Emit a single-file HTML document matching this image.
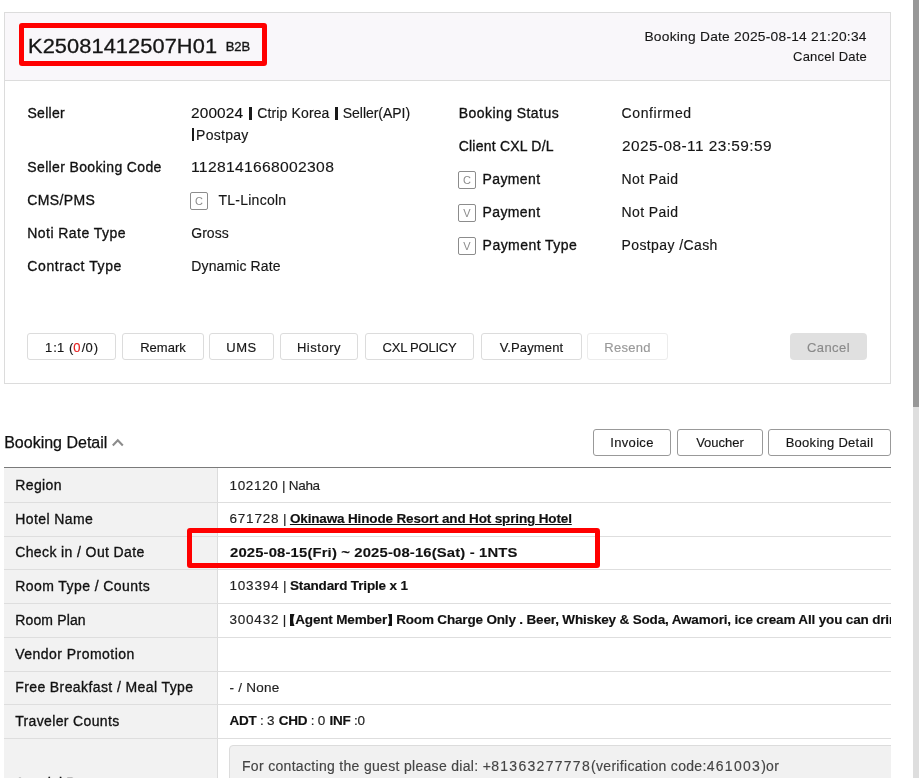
<!DOCTYPE html>
<html><head><meta charset="utf-8"><style>
html,body{margin:0;padding:0;width:919px;height:778px;overflow:hidden;background:#fff;}
body{position:relative;font-family:"Liberation Sans", sans-serif;will-change:transform;}
.t{position:absolute;white-space:nowrap;letter-spacing:var(--ls);}
.clip b{color:#111;}
.d{letter-spacing:calc(var(--ls) + 0.07em);}
b .d{letter-spacing:calc(var(--ls) + 0.1em);}
.nd .d{letter-spacing:var(--ls);}
.nd{-webkit-text-stroke:0.12px currentColor !important;}
.med{-webkit-text-stroke:0.32px currentColor;color:#111 !important;}
.reg{-webkit-text-stroke:0.15px currentColor;}
#bd_title{-webkit-text-stroke:0.25px currentColor;}
#b2b{-webkit-text-stroke:0.35px currentColor !important;}
#bkno{-webkit-text-stroke:0.3px currentColor !important;}
.bar{display:inline-block;width:3px;height:13px;background:#111;vertical-align:-2px;}
.cb{position:absolute;width:18px;height:18px;box-sizing:border-box;border:1px solid #8c8c8c;border-radius:2px;font-size:11px;line-height:16px;text-align:center;color:#8c8c8c;font-family:"Liberation Sans", sans-serif;}
.clip{position:absolute;left:0;top:0;width:891px;height:778px;overflow:hidden;}
.br{display:inline-block;vertical-align:-2px;margin:0 0.5px;}
.lbr{border-left:3px solid #111;border-top:1px solid #111;border-bottom:1px solid #111;width:2px;box-sizing:content-box;height:10px}
.rbr{border-right:3px solid #111;border-top:1px solid #111;border-bottom:1px solid #111;width:2px;box-sizing:content-box;height:10px}
</style></head><body>
<div style="position:absolute;left:913px;top:0px;width:6px;height:778px;box-sizing:border-box;background:#dedede"></div>
<div style="position:absolute;left:913px;top:0px;width:6px;height:407px;box-sizing:border-box;background:#989898"></div>
<div style="position:absolute;left:4px;top:12px;width:887px;height:372px;box-sizing:border-box;border:1px solid #dcdcdc;background:#fff"></div>
<div style="position:absolute;left:5px;top:13px;width:885px;height:68px;box-sizing:border-box;background:#f9f7fa;border-bottom:1px solid #dcdcdc"></div>
<div style="position:absolute;left:19px;top:23px;width:248px;height:43px;box-sizing:border-box;border:5px solid #ff0000;border-radius:3px"></div>
<div style="position:absolute;left:249.4px;top:107.4px;width:2.6px;height:12.4px;background:#1a1a1a"></div>
<div style="position:absolute;left:335px;top:107.4px;width:2.6px;height:12.4px;background:#1a1a1a"></div>
<div style="position:absolute;left:191.8px;top:128.4px;width:2.6px;height:12.4px;background:#1a1a1a"></div>
<div class="cb" style="left:190px;top:192px">C</div>
<div class="cb" style="left:458px;top:171px">C</div>
<div class="cb" style="left:458px;top:204px">V</div>
<div class="cb" style="left:458px;top:237px">V</div>
<div style="position:absolute;left:27px;top:333px;width:89px;height:27px;box-sizing:border-box;border:1px solid #dcdcdc;border-radius:3px;background:#fff"></div>
<div style="position:absolute;left:122px;top:333px;width:82px;height:27px;box-sizing:border-box;border:1px solid #dcdcdc;border-radius:3px;background:#fff"></div>
<div style="position:absolute;left:209px;top:333px;width:65px;height:27px;box-sizing:border-box;border:1px solid #dcdcdc;border-radius:3px;background:#fff"></div>
<div style="position:absolute;left:280px;top:333px;width:78px;height:27px;box-sizing:border-box;border:1px solid #dcdcdc;border-radius:3px;background:#fff"></div>
<div style="position:absolute;left:365px;top:333px;width:109px;height:27px;box-sizing:border-box;border:1px solid #dcdcdc;border-radius:3px;background:#fff"></div>
<div style="position:absolute;left:481px;top:333px;width:101px;height:27px;box-sizing:border-box;border:1px solid #dcdcdc;border-radius:3px;background:#fff"></div>
<div style="position:absolute;left:587px;top:333px;width:81px;height:27px;box-sizing:border-box;border:1px solid #ececec;border-radius:3px;background:#fff"></div>
<div style="position:absolute;left:790px;top:333px;width:77px;height:27px;box-sizing:border-box;background:#e0e0e0;border-radius:4px"></div>
<div style="position:absolute;left:593px;top:429px;width:78px;height:27px;box-sizing:border-box;border:1px solid #999;border-radius:3px;background:#fff"></div>
<div style="position:absolute;left:677px;top:429px;width:86px;height:27px;box-sizing:border-box;border:1px solid #999;border-radius:3px;background:#fff"></div>
<div style="position:absolute;left:768px;top:429px;width:123px;height:27px;box-sizing:border-box;border:1px solid #999;border-radius:3px;background:#fff"></div>
<svg style="position:absolute;left:111px;top:437px" width="14" height="11" viewBox="0 0 14 11"><path d="M1.8 8.4 L6.8 3.2 L11.8 8.4" fill="none" stroke="#8c8c8c" stroke-width="2.1"/></svg>
<div class="t reg nd" id="bkno" style="top:36.07px;font-size:20px;line-height:20px;color:#161616;--ls:0.071px;transform:scaleX(1.09);transform-origin:left;left:28.00px;">K<span class="d">25081412507</span>H<span class="d">01</span></div>
<div class="t reg nd" id="b2b" style="top:40.00px;font-size:13px;line-height:13px;color:#161616;--ls:0.000px;transform:scaleX(1.0);transform-origin:left;left:225.70px;">B<span class="d">2</span>B</div>
<div class="t reg nd" id="bdate" style="top:30.40px;font-size:13px;line-height:13px;color:#161616;--ls:0.226px;transform:scaleX(1.06);transform-origin:right;right:52.00px;text-align:right;">Booking Date <span class="d">2025</span>-<span class="d">08</span>-<span class="d">14</span> <span class="d">21</span>:<span class="d">20</span>:<span class="d">34</span></div>
<div class="t reg nd" id="cdate" style="top:50.00px;font-size:13px;line-height:13px;color:#161616;--ls:0.220px;transform:scaleX(1.0);transform-origin:right;right:52.00px;text-align:right;">Cancel Date</div>
<div class="t med" id="l_seller" style="top:106.15px;font-size:14px;line-height:14px;color:#222;--ls:0.320px;left:27.40px;">Seller</div>
<div class="t med" id="l_sbc" style="top:159.95px;font-size:14px;line-height:14px;color:#222;--ls:0.356px;left:27.30px;">Seller Booking Code</div>
<div class="t med" id="l_cms" style="top:192.65px;font-size:14px;line-height:14px;color:#222;--ls:0.367px;left:27.30px;">CMS/PMS</div>
<div class="t med" id="l_noti" style="top:226.45px;font-size:14px;line-height:14px;color:#222;--ls:0.446px;left:27.30px;">Noti Rate Type</div>
<div class="t med" id="l_ctr" style="top:259.35px;font-size:14px;line-height:14px;color:#222;--ls:0.600px;left:27.30px;">Contract Type</div>
<div class="t reg nd" id="v_seller" style="top:106.15px;font-size:14px;line-height:14px;color:#111;--ls:0.120px;transform:scaleX(1.1);transform-origin:left;left:191.30px;"><span class="d">200024</span></div>
<div class="t reg" id="v_seller_b" style="top:106.15px;font-size:14px;line-height:14px;color:#161616;--ls:0.140px;left:257.20px;">Ctrip Korea</div>
<div class="t reg" id="v_seller_c" style="top:106.15px;font-size:14px;line-height:14px;color:#161616;--ls:-0.040px;left:342.80px;">Seller(API)</div>
<div class="t reg" id="v_seller2" style="top:128.15px;font-size:14px;line-height:14px;color:#161616;--ls:0.267px;left:196.10px;">Postpay</div>
<div class="t reg nd" id="v_sbc" style="top:160.15px;font-size:14px;line-height:14px;color:#161616;--ls:0.267px;transform:scaleX(1.12);transform-origin:left;left:191.30px;"><span class="d">1128141668002308</span></div>
<div class="t reg" id="v_cms" style="top:193.15px;font-size:14px;line-height:14px;color:#161616;--ls:0.244px;left:218.50px;">TL-Lincoln</div>
<div class="t reg" id="v_noti" style="top:226.15px;font-size:14px;line-height:14px;color:#161616;--ls:0.000px;left:191.30px;">Gross</div>
<div class="t reg" id="v_ctr" style="top:259.15px;font-size:14px;line-height:14px;color:#161616;--ls:0.109px;left:191.30px;">Dynamic Rate</div>
<div class="t med" id="r_bs" style="top:106.15px;font-size:14px;line-height:14px;color:#222;--ls:0.446px;left:458.70px;">Booking Status</div>
<div class="t med" id="r_cxl" style="top:139.15px;font-size:14px;line-height:14px;color:#222;--ls:0.215px;left:458.70px;">Client CXL D/L</div>
<div class="t med" id="r_cp" style="top:172.35px;font-size:14px;line-height:14px;color:#222;--ls:0.367px;left:482.60px;">Payment</div>
<div class="t med" id="r_vp" style="top:205.35px;font-size:14px;line-height:14px;color:#222;--ls:0.367px;left:482.60px;">Payment</div>
<div class="t med" id="r_vpt" style="top:238.35px;font-size:14px;line-height:14px;color:#222;--ls:0.455px;left:482.60px;">Payment Type</div>
<div class="t reg" id="rv_bs" style="top:106.15px;font-size:14px;line-height:14px;color:#161616;--ls:0.625px;left:621.50px;">Confirmed</div>
<div class="t reg nd" id="rv_cxl" style="top:139.15px;font-size:14px;line-height:14px;color:#161616;--ls:0.389px;transform:scaleX(1.1);transform-origin:left;left:621.50px;"><span class="d">2025</span>-<span class="d">08</span>-<span class="d">11</span> <span class="d">23</span>:<span class="d">59</span>:<span class="d">59</span></div>
<div class="t reg" id="rv_cp" style="top:172.35px;font-size:14px;line-height:14px;color:#161616;--ls:0.400px;left:621.50px;">Not Paid</div>
<div class="t reg" id="rv_vp" style="top:205.35px;font-size:14px;line-height:14px;color:#161616;--ls:0.400px;left:621.50px;">Not Paid</div>
<div class="t reg" id="rv_vpt" style="top:238.35px;font-size:14px;line-height:14px;color:#161616;--ls:0.400px;left:621.50px;">Postpay /Cash</div>
<div class="t reg" id="btn0" style="top:340.80px;font-size:13px;line-height:13px;color:#161616;--ls:0.125px;left:-228.50px;width:600px;text-align:center;"><span class="d">1</span>:<span class="d">1</span> (<span style="color:#e52020"><span class="d">0</span></span>/<span class="d">0</span>)</div>
<div class="t reg" id="btn1" style="top:340.80px;font-size:13px;line-height:13px;color:#161616;--ls:0.000px;left:-137.00px;width:600px;text-align:center;">Remark</div>
<div class="t reg" id="btn2" style="top:340.80px;font-size:13px;line-height:13px;color:#161616;--ls:0.500px;left:-58.50px;width:600px;text-align:center;">UMS</div>
<div class="t reg" id="btn3" style="top:340.80px;font-size:13px;line-height:13px;color:#161616;--ls:0.533px;left:19.00px;width:600px;text-align:center;">History</div>
<div class="t reg" id="btn4" style="top:340.80px;font-size:13px;line-height:13px;color:#161616;--ls:-0.222px;left:119.50px;width:600px;text-align:center;">CXL POLICY</div>
<div class="t reg" id="btn5" style="top:340.80px;font-size:13px;line-height:13px;color:#161616;--ls:0.125px;left:231.50px;width:600px;text-align:center;">V.Payment</div>
<div class="t reg" id="btn6" style="top:340.80px;font-size:13px;line-height:13px;color:#999;--ls:0.280px;left:327.50px;width:600px;text-align:center;">Resend</div>
<div class="t reg" id="btn7" style="top:340.80px;font-size:13px;line-height:13px;color:#8a8a8a;--ls:0.400px;left:528.50px;width:600px;text-align:center;">Cancel</div>
<div class="t reg" id="bd_title" style="top:434.66px;font-size:16px;line-height:16px;color:#111;--ls:0.000px;left:4.20px;">Booking Detail</div>
<div class="t reg" id="bdb0" style="top:435.80px;font-size:13px;line-height:13px;color:#161616;--ls:0.333px;left:332.00px;width:600px;text-align:center;">Invoice</div>
<div class="t reg" id="bdb1" style="top:435.80px;font-size:13px;line-height:13px;color:#161616;--ls:0.000px;left:420.00px;width:600px;text-align:center;">Voucher</div>
<div class="t reg" id="bdb2" style="top:435.80px;font-size:13px;line-height:13px;color:#161616;--ls:0.277px;left:529.50px;width:600px;text-align:center;">Booking Detail</div>
<div class="clip">
<div style="position:absolute;left:4px;top:467px;width:887px;height:311px;box-sizing:border-box;background:#fff"></div>
<div style="position:absolute;left:4px;top:468px;width:213px;height:310px;box-sizing:border-box;background:#f2f2f2"></div>
<div style="position:absolute;left:217px;top:468px;width:1px;height:310px;box-sizing:border-box;background:#dcdcdc"></div>
<div style="position:absolute;left:4px;top:467px;width:887px;height:1px;box-sizing:border-box;background:#7a7a7a"></div>
<div style="position:absolute;left:4px;top:502px;width:887px;height:1px;box-sizing:border-box;background:#dedede"></div>
<div style="position:absolute;left:4px;top:536px;width:887px;height:1px;box-sizing:border-box;background:#dedede"></div>
<div style="position:absolute;left:4px;top:569px;width:887px;height:1px;box-sizing:border-box;background:#dedede"></div>
<div style="position:absolute;left:4px;top:603px;width:887px;height:1px;box-sizing:border-box;background:#dedede"></div>
<div style="position:absolute;left:4px;top:637px;width:887px;height:1px;box-sizing:border-box;background:#dedede"></div>
<div style="position:absolute;left:4px;top:671px;width:887px;height:1px;box-sizing:border-box;background:#dedede"></div>
<div style="position:absolute;left:4px;top:704px;width:887px;height:1px;box-sizing:border-box;background:#dedede"></div>
<div style="position:absolute;left:4px;top:738px;width:887px;height:1px;box-sizing:border-box;background:#dedede"></div>
<div style="position:absolute;left:229px;top:745px;width:700px;height:60px;box-sizing:border-box;border:1px solid #dcdcdc;border-radius:4px;background:#f1f1f1"></div>
<div class="t med" id="tl0" style="top:478.25px;font-size:14px;line-height:14px;color:#222;--ls:0.400px;left:15.20px;">Region</div>
<div class="t med" id="tl1" style="top:511.95px;font-size:14px;line-height:14px;color:#222;--ls:0.422px;left:15.20px;">Hotel Name</div>
<div class="t med" id="tl2" style="top:545.45px;font-size:14px;line-height:14px;color:#222;--ls:0.389px;left:15.20px;">Check in / Out Date</div>
<div class="t med" id="tl3" style="top:578.95px;font-size:14px;line-height:14px;color:#222;--ls:0.424px;left:15.20px;">Room Type / Counts</div>
<div class="t med" id="tl4" style="top:612.95px;font-size:14px;line-height:14px;color:#222;--ls:0.150px;left:15.20px;">Room Plan</div>
<div class="t med" id="tl5" style="top:646.95px;font-size:14px;line-height:14px;color:#222;--ls:0.467px;left:15.20px;">Vendor Promotion</div>
<div class="t med" id="tl6" style="top:680.45px;font-size:14px;line-height:14px;color:#222;--ls:0.400px;left:15.20px;">Free Breakfast / Meal Type</div>
<div class="t med" id="tl7" style="top:713.95px;font-size:14px;line-height:14px;color:#222;--ls:0.357px;left:15.20px;">Traveler Counts</div>
<div class="t reg" id="tv0" style="top:478.67px;font-size:13.5px;line-height:13.5px;color:#222;--ls:-0.283px;left:229.50px;"><span class="d">102120</span> | Naha</div>
<div class="t reg" id="tv1" style="top:512.37px;font-size:13.5px;line-height:13.5px;color:#222;--ls:-0.148px;left:229.50px;"><span class="d">671728</span> | <b><u>Okinawa Hinode Resort and Hot spring Hotel</u></b></div>
<div class="t reg nd" id="tv2" style="top:545.87px;font-size:13.5px;line-height:13.5px;color:#222;--ls:0.128px;transform:scaleX(1.1);transform-origin:left;left:229.50px;"><b><span class="d">2025</span>-<span class="d">08</span>-<span class="d">15</span>(Fri) ~ <span class="d">2025</span>-<span class="d">08</span>-<span class="d">16</span>(Sat) - <span class="d">1</span>NTS</b></div>
<div class="t reg" id="tv3" style="top:579.37px;font-size:13.5px;line-height:13.5px;color:#222;--ls:-0.148px;left:229.50px;"><span class="d">103394</span> | <b>Standard Triple x <span class="d">1</span></b></div>
<div class="t reg" id="tv4" style="top:613.37px;font-size:13.5px;line-height:13.5px;color:#222;--ls:-0.165px;left:229.50px;"><span class="d">300432</span> | <b><svg class="br" width="4.5" height="12" viewBox="0 0 4.5 12"><path d="M0 0H4.5Q1.8 6 4.5 12H0Z" fill="#111"/></svg>Agent Member<svg class="br" width="4.5" height="12" viewBox="0 0 4.5 12"><path d="M4.5 0H0Q2.7 6 0 12H4.5Z" fill="#111"/></svg> Room Charge Only . Beer, Whiskey &amp; Soda, Awamori, ice cream All you can drink and sake</b></div>
<div class="t reg" id="tv6" style="top:680.87px;font-size:13.5px;line-height:13.5px;color:#222;--ls:0.257px;left:229.50px;">- / None</div>
<div class="t reg" id="tv7" style="top:714.37px;font-size:13.5px;line-height:13.5px;color:#222;--ls:-0.248px;left:229.50px;"><b>ADT</b> : <span class="d">3</span> <b>CHD</b> : <span class="d">0</span> <b>INF</b> :<span class="d">0</span></div>
<div class="t reg" id="req" style="top:758.85px;font-size:14px;line-height:14px;color:#444;--ls:0.312px;left:242.00px;">For contacting the guest please dial: +<span class="d">81363277778</span>(verification code:<span class="d">461003</span>)or</div>
<div class="t med" id="sreq" style="top:776.15px;font-size:14px;line-height:14px;color:#222;--ls:0.150px;left:15.20px;">Special Request</div>
</div>
<div style="position:absolute;left:187px;top:528px;width:413px;height:40px;box-sizing:border-box;border:5px solid #ff0000;border-radius:3px"></div>
</body></html>
